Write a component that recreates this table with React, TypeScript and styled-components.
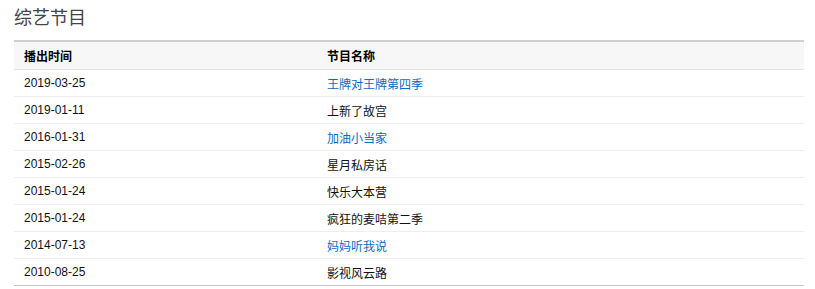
import styled, { createGlobalStyle } from "styled-components";

const GlobalStyle = createGlobalStyle`
  body {
    margin: 0;
    background: #fff;
    font-family: "Liberation Sans", Arial, "Noto Sans CJK SC", sans-serif;
  }
`;

const Page = styled.div`
  padding: 6px 11px 0 14px;
`;

const Title = styled.h2`
  margin: 0 0 9px;
  height: 25px;
  line-height: 25px;
  font-size: 18px;
  font-weight: normal;
  color: #444;
`;

const Table = styled.table`
  width: 100%;
  border-collapse: collapse;
  border-top: 2px solid #cfcfcf;
  border-bottom: 1px solid #c2c8ce;
  font-size: 12px;
`;

const HeadCell = styled.th<{ $w?: string }>`
  width: ${p => p.$w ?? "auto"};
  height: 27px;
  padding: 0 10px;
  text-align: left;
  font-weight: bold;
  color: #000;
  background: #f7f7f7;
  border-bottom: 1px solid #e3e3e3;
`;

const Row = styled.tr`
  & + & td {
    border-top: 1px solid #eeeeee;
  }
`;

const Cell = styled.td<{ $link?: boolean }>`
  height: 26px;
  padding: 0 10px;
  color: ${p => (p.$link ? "#0a6bc2" : "#111")};
`;

const items = [
  { date: "2019-03-25", name: "王牌对王牌第四季", link: true },
  { date: "2019-01-11", name: "上新了故宫", link: false },
  { date: "2016-01-31", name: "加油小当家", link: true },
  { date: "2015-02-26", name: "星月私房话", link: false },
  { date: "2015-01-24", name: "快乐大本营", link: false },
  { date: "2015-01-24", name: "疯狂的麦咭第二季", link: false },
  { date: "2014-07-13", name: "妈妈听我说", link: true },
  { date: "2010-08-25", name: "影视风云路", link: false },
];

export default function App() {
  return (
    <Page>
      <GlobalStyle />
      <Title>综艺节目</Title>
      <Table>
        <thead>
          <tr>
            <HeadCell $w="283px">播出时间</HeadCell>
            <HeadCell>节目名称</HeadCell>
          </tr>
        </thead>
        <tbody>
          {items.map((it, i) => (
            <Row key={i}>
              <Cell>{it.date}</Cell>
              <Cell $link={it.link}>{it.name}</Cell>
            </Row>
          ))}
        </tbody>
      </Table>
    </Page>
  );
}
